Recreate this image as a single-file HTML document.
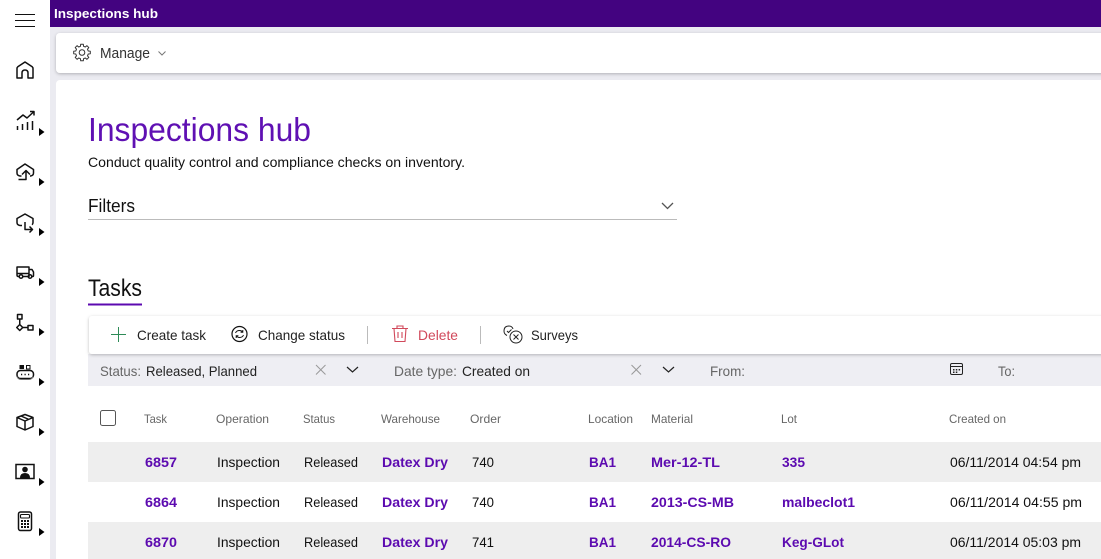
<!DOCTYPE html>
<html><head><meta charset="utf-8"><title>Inspections hub</title>
<style>
html,body{margin:0;padding:0;width:1101px;height:559px;overflow:hidden;background:#ebebf1}
svg{position:absolute;left:0;top:0;display:block}
text{font-family:"Liberation Sans",sans-serif;white-space:pre}
.h{font-size:12px;fill:#666}
.c{font-size:14px;fill:#111}
.l{font-size:14px;font-weight:bold;fill:#5c0ab0}
.t{font-size:14px;fill:#222}
.f{font-size:14px;fill:#666}
.i{fill:none;stroke:#111;stroke-width:1.5;stroke-linejoin:round}
.a{fill:#000}
</style></head><body>
<svg width="1101" height="559" viewBox="0 0 1101 559" xmlns="http://www.w3.org/2000/svg">
<defs><filter id="s" x="-2%" y="-20%" width="104%" height="150%"><feDropShadow dx="0" dy="1" stdDeviation="1.5" flood-color="#000" flood-opacity=".25"/></filter></defs>
<rect x="0" y="0" width="50" height="559" fill="#fff"/>
<rect x="50" y="0" width="1051" height="27" fill="#430380"/>
<text x="54" y="18" font-size="13" font-weight="bold" fill="#fff" textLength="104" lengthAdjust="spacingAndGlyphs">Inspections hub</text>
<rect x="56" y="33" width="1060" height="40" rx="4" fill="#fff" filter="url(#s)"/>
<rect x="56" y="80" width="1060" height="490" rx="4" fill="#fff"/>

<!-- sidebar icons -->
<path d="M15 14.500h20M15 20.500h20M15 26.500h20" stroke="#111" stroke-width="1" fill="none"/>
<path class="i" d="M17 78v-9.500q0-1 .8-1.700L25 62l7.200 4.800q.8.700.8 1.700V78h-5v-5q0-3-3-3t-3 3v5z"/>
<g class="i"><path d="M17 120l6-5 4 3 7-6.500M30 111.500h4v4"/><path d="M17.500 130v-4M22.500 130v-6M27.500 130v-8M32.500 130v-9"/></g>
<g class="i"><path d="M21.500 176H20q-3-.5-3-3v-3.500l8-5.500 8.500 5.500V173q0 2.500-3 3H30"/><path d="M18.500 179.500h7.500V171M22 174.500l4-4 4 4"/></g>
<g class="i"><path d="M22 225.500h-2q-3-.5-3-3v-4l8-4.500 8 4.500v4q0 1.500-1 2.200"/><path d="M25 222v7.500h7M29.500 226.500l3 3-3 3"/></g>
<g class="i"><path d="M19 276.500h-.5q-1.500 0-1.500-1.500v-8h12v9.500h-6.500M29 269.500h3l1.500 2.500v3.500q0 1-1 1h-.5"/><path d="M17 273.500h12"/><circle cx="21" cy="276.500" r="1.800"/><circle cx="30" cy="276.500" r="1.800"/></g>
<g class="i"><rect x="17.500" y="314.500" width="4.500" height="4.500"/><path d="M19.750 319v6"/><path d="M19.750 324.500l3 3-3 3-3-3z"/><path d="M22.750 327.500H28"/><rect x="28" y="325.500" width="5" height="4.500"/></g>
<g class="i"><rect x="17" y="370.500" width="16.500" height="8" rx="3.500"/><path d="M21 374.500h1.200M24.500 374.500h1.200M28 374.500h1.200" stroke-width="1.500"/></g>
<rect x="19.500" y="365" width="4.500" height="4" fill="#111"/><rect x="26.500" y="365.500" width="3.500" height="3.500" fill="none" stroke="#111"/>
<path d="M17 376.500q1 3 4 3h8q3 0 4-3" fill="none" stroke="#777" stroke-width="1"/>
<g class="i"><path d="M25 414.500l8 3v9l-8 3.500-8-3.500v-9zM17 417.500l8 3.500 8-3.500M25 421v9M21 416l8 3.500"/></g>
<rect x="16" y="464.500" width="18" height="14" fill="none" stroke="#111" stroke-width="1.500"/>
<circle cx="25" cy="469.500" r="2.800" fill="#111"/><path d="M20 478q0-5 5-5t5 5z" fill="#111"/>
<g class="i"><rect x="18.500" y="512" width="13" height="18.500" rx="2"/><rect x="20.500" y="514.500" width="9" height="3.500" rx="1" stroke-width="1.100"/></g>
<g fill="#111"><rect x="21" y="520" width="2" height="2"/><rect x="24" y="520" width="2" height="2"/><rect x="27" y="520" width="2" height="2"/><rect x="21" y="523" width="2" height="2"/><rect x="24" y="523" width="2" height="2"/><rect x="27" y="523" width="2" height="2"/><rect x="21" y="526" width="2" height="2"/><rect x="24" y="526" width="2" height="2"/><rect x="27" y="526" width="2" height="2"/></g>
<g class="a">
<path d="M39 128l5.500 4-5.500 4z"/>
<path d="M39 178l5.500 4-5.500 4z"/>
<path d="M39 228l5.500 4-5.500 4z"/>
<path d="M39 278l5.500 4-5.500 4z"/>
<path d="M39 328l5.500 4-5.500 4z"/>
<path d="M39 378l5.500 4-5.500 4z"/>
<path d="M39 428l5.500 4-5.500 4z"/>
<path d="M39 478l5.500 4-5.500 4z"/>
<path d="M39 528l5.500 4-5.500 4z"/>
</g>

<!-- manage -->
<g fill="none" stroke="#333" stroke-width="1" stroke-linejoin="round" transform="translate(82,52.500)"><circle r="2.800"/><polygon points="6.21,-1.55 8.30,-1.31 8.30,1.31 6.21,1.55 5.49,3.30 6.80,4.94 4.94,6.80 3.30,5.49 1.55,6.21 1.31,8.30 -1.31,8.30 -1.55,6.21 -3.30,5.49 -4.94,6.80 -6.80,4.94 -5.49,3.30 -6.21,1.55 -8.30,1.31 -8.30,-1.31 -6.21,-1.55 -5.49,-3.30 -6.80,-4.94 -4.94,-6.80 -3.30,-5.49 -1.55,-6.21 -1.31,-8.30 1.31,-8.30 1.55,-6.21 3.30,-5.49 4.94,-6.80 6.80,-4.94 5.49,-3.30"/></g>
<text x="100" y="58" font-size="14.500" fill="#333" textLength="50" lengthAdjust="spacingAndGlyphs">Manage</text>
<path d="M158.500 51.500l3.500 3.500 3.500-3.500" fill="none" stroke="#777" stroke-width="1"/>

<!-- heading -->
<text x="88" y="141" font-size="33" fill="#5f10b3" textLength="223" lengthAdjust="spacingAndGlyphs">Inspections hub</text>
<text x="88" y="167" font-size="14" fill="#111" textLength="377" lengthAdjust="spacingAndGlyphs">Conduct quality control and compliance checks on inventory.</text>
<text x="88" y="212" font-size="18" fill="#111" textLength="47" lengthAdjust="spacingAndGlyphs">Filters</text>
<rect x="88" y="219" width="589" height="1" fill="#bbb"/>
<path d="M662 203l5.500 5.500 5.500-5.500" fill="none" stroke="#555" stroke-width="1.300"/>
<text x="88" y="296" font-size="24" fill="#111" textLength="54" lengthAdjust="spacingAndGlyphs">Tasks</text>
<rect x="88" y="303.500" width="54" height="2" fill="#5c0ab0"/>

<!-- filter band -->
<rect x="88" y="354" width="1020" height="32" fill="#eeeef3"/>
<!-- toolbar -->
<rect x="89" y="316" width="1020" height="38" rx="3" fill="#fff" filter="url(#s)"/>
<path d="M118.500 327v15M111 334.500h15" stroke="#2e8b57" stroke-width="1" fill="none"/>
<text class="t" x="137" y="340" textLength="69" lengthAdjust="spacingAndGlyphs">Create task</text>
<circle cx="239.500" cy="334" r="7.500" fill="none" stroke="#111" stroke-width="1.200"/>
<path d="M235.500 333q1-2.500 4-2.500 2 0 3 1.500M243.500 335q-1 2.500-4 2.500-2 0-3-1.500M242.800 330v2.200h-2.200M236.200 338v-2.200h2.200" fill="none" stroke="#111" stroke-width="1"/>
<text class="t" x="258" y="340" textLength="87" lengthAdjust="spacingAndGlyphs">Change status</text>
<rect x="367" y="326" width="1" height="18" fill="#bbb"/>
<path d="M392 328.500h16M397 328.500v-2.500h6v2.500M394 328.500l1 13h10l1-13M398 332v6M402 332v6" fill="none" stroke="#d1495b" stroke-width="1.100"/>
<text x="418" y="340" font-size="14" fill="#d1495b" textLength="40" lengthAdjust="spacingAndGlyphs">Delete</text>
<rect x="480" y="326" width="1" height="18" fill="#bbb"/>
<g fill="none" stroke="#222" stroke-width="1"><path d="M513 329q-1-3-4-3-5 0-5 5 0 3 3 4.500"/><path d="M507 331l1.500 1.500 3-3"/><circle cx="516" cy="337" r="6"/><path d="M513.500 334.500l5 5M518.500 334.500l-5 5"/></g>
<text class="t" x="531" y="340" textLength="47" lengthAdjust="spacingAndGlyphs">Surveys</text>

<text class="f" x="100" y="376" textLength="41" lengthAdjust="spacingAndGlyphs">Status:</text>
<text class="t" x="146" y="376" textLength="111" lengthAdjust="spacingAndGlyphs">Released, Planned</text>
<path d="M316 365l9.500 9.500M325.500 365l-9.500 9.500" stroke="#999" stroke-width="1" fill="none"/>
<path d="M347 367l5.500 5 5.500-5" stroke="#222" stroke-width="1.200" fill="none"/>
<text class="f" x="394" y="376" textLength="63" lengthAdjust="spacingAndGlyphs">Date type:</text>
<text class="t" x="462" y="376" textLength="68" lengthAdjust="spacingAndGlyphs">Created on</text>
<path d="M631.500 365l9.500 9.500M641 365l-9.500 9.500" stroke="#999" stroke-width="1" fill="none"/>
<path d="M663 367l5.500 5 5.500-5" stroke="#222" stroke-width="1.200" fill="none"/>
<text class="f" x="710" y="376" textLength="35" lengthAdjust="spacingAndGlyphs">From:</text>
<rect x="950.500" y="363.500" width="12" height="11" rx="1.500" fill="none" stroke="#222"/>
<path d="M951 366.500h11" stroke="#222"/>
<g fill="#222"><rect x="953" y="369" width="1.500" height="1.500"/><rect x="955.800" y="369" width="1.500" height="1.500"/><rect x="958.600" y="369" width="1.500" height="1.500"/><rect x="953" y="371.500" width="1.500" height="1.500"/><rect x="955.800" y="371.500" width="1.500" height="1.500"/></g>
<text class="f" x="998" y="376" textLength="17" lengthAdjust="spacingAndGlyphs">To:</text>

<!-- table head -->
<rect x="100.500" y="410.500" width="15" height="15" rx="2" fill="#fff" stroke="#555"/>
<text class="h" x="144" y="423" textLength="23" lengthAdjust="spacingAndGlyphs">Task</text>
<text class="h" x="216" y="423" textLength="53" lengthAdjust="spacingAndGlyphs">Operation</text>
<text class="h" x="303" y="423" textLength="32" lengthAdjust="spacingAndGlyphs">Status</text>
<text class="h" x="381" y="423" textLength="59" lengthAdjust="spacingAndGlyphs">Warehouse</text>
<text class="h" x="470" y="423" textLength="31" lengthAdjust="spacingAndGlyphs">Order</text>
<text class="h" x="588" y="423" textLength="45" lengthAdjust="spacingAndGlyphs">Location</text>
<text class="h" x="651" y="423" textLength="42" lengthAdjust="spacingAndGlyphs">Material</text>
<text class="h" x="781" y="423" textLength="16" lengthAdjust="spacingAndGlyphs">Lot</text>
<text class="h" x="949" y="423" textLength="57" lengthAdjust="spacingAndGlyphs">Created on</text>

<!-- rows -->
<rect x="88" y="442" width="1020" height="40" fill="#eeeeee"/>
<rect x="88" y="522" width="1020" height="37" fill="#eeeeee"/>

<text class="l" x="145" y="467" textLength="32" lengthAdjust="spacingAndGlyphs">6857</text>
<text class="c" x="217" y="467" textLength="63" lengthAdjust="spacingAndGlyphs">Inspection</text>
<text class="c" x="304" y="467" textLength="54" lengthAdjust="spacingAndGlyphs">Released</text>
<text class="l" x="382" y="467" textLength="66" lengthAdjust="spacingAndGlyphs">Datex Dry</text>
<text class="c" x="472" y="467" textLength="22" lengthAdjust="spacingAndGlyphs">740</text>
<text class="l" x="589" y="467" textLength="27" lengthAdjust="spacingAndGlyphs">BA1</text>
<text class="l" x="651" y="467" textLength="69" lengthAdjust="spacingAndGlyphs">Mer-12-TL</text>
<text class="l" x="782" y="467" textLength="23" lengthAdjust="spacingAndGlyphs">335</text>
<text class="c" x="950" y="467" textLength="131" lengthAdjust="spacingAndGlyphs">06/11/2014 04:54 pm</text>

<text class="l" x="145" y="507" textLength="32" lengthAdjust="spacingAndGlyphs">6864</text>
<text class="c" x="217" y="507" textLength="63" lengthAdjust="spacingAndGlyphs">Inspection</text>
<text class="c" x="304" y="507" textLength="54" lengthAdjust="spacingAndGlyphs">Released</text>
<text class="l" x="382" y="507" textLength="66" lengthAdjust="spacingAndGlyphs">Datex Dry</text>
<text class="c" x="472" y="507" textLength="22" lengthAdjust="spacingAndGlyphs">740</text>
<text class="l" x="589" y="507" textLength="27" lengthAdjust="spacingAndGlyphs">BA1</text>
<text class="l" x="651" y="507" textLength="83" lengthAdjust="spacingAndGlyphs">2013-CS-MB</text>
<text class="l" x="782" y="507" textLength="73" lengthAdjust="spacingAndGlyphs">malbeclot1</text>
<text class="c" x="950" y="507" textLength="132" lengthAdjust="spacingAndGlyphs">06/11/2014 04:55 pm</text>

<text class="l" x="145" y="547" textLength="32" lengthAdjust="spacingAndGlyphs">6870</text>
<text class="c" x="217" y="547" textLength="63" lengthAdjust="spacingAndGlyphs">Inspection</text>
<text class="c" x="304" y="547" textLength="54" lengthAdjust="spacingAndGlyphs">Released</text>
<text class="l" x="382" y="547" textLength="66" lengthAdjust="spacingAndGlyphs">Datex Dry</text>
<text class="c" x="472" y="547" textLength="22" lengthAdjust="spacingAndGlyphs">741</text>
<text class="l" x="589" y="547" textLength="27" lengthAdjust="spacingAndGlyphs">BA1</text>
<text class="l" x="651" y="547" textLength="80" lengthAdjust="spacingAndGlyphs">2014-CS-RO</text>
<text class="l" x="782" y="547" textLength="62" lengthAdjust="spacingAndGlyphs">Keg-GLot</text>
<text class="c" x="950" y="547" textLength="131" lengthAdjust="spacingAndGlyphs">06/11/2014 05:03 pm</text>
</svg>
</body></html>
